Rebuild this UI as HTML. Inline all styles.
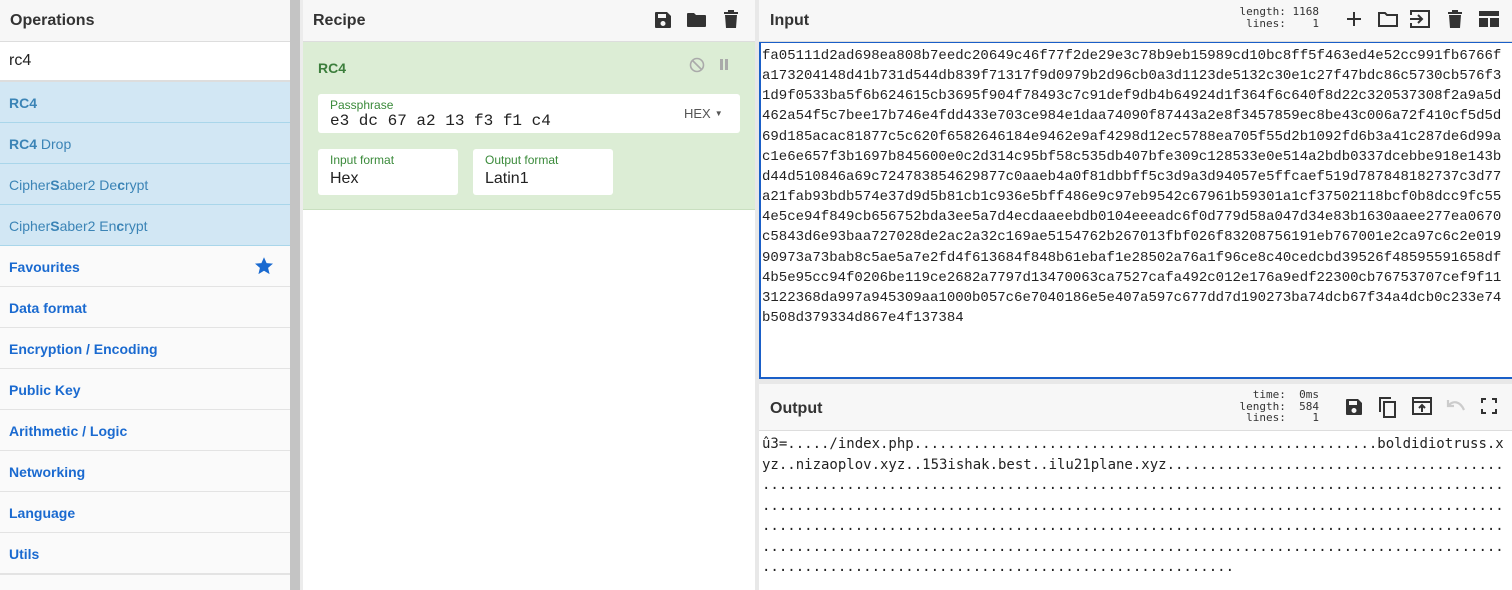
<!DOCTYPE html>
<html style="width:1512px;height:590px;overflow:hidden"><head><meta charset="utf-8"><style>
*{box-sizing:border-box;margin:0;padding:0}
body{width:1512px;height:590px;overflow:hidden;background:#fafafa;font-family:"Liberation Sans",Arial,sans-serif;position:relative}
.abs{position:absolute}
.hdr{height:42px;background:#f7f7f7;border-bottom:1px solid #ddd;font-size:16px;font-weight:bold;color:#333;padding:12px 10px 0 10px}
.op{position:absolute;left:0;width:290px;height:41px;border-bottom:1px solid #e3e3e3;padding:13px 9px;font-size:14px;font-weight:bold;color:#1a6ad0}
.sel{background:#d2e7f4;border-bottom:1px solid #a9d6ea;color:#3b84b6;font-weight:normal}
.mono{font-family:"Liberation Mono","DejaVu Sans Mono",monospace;font-size:14px;line-height:20.15px;color:#222;white-space:pre}
.dmono{font-family:"DejaVu Sans Mono",monospace;font-size:14px;line-height:20.5px;color:#222;white-space:pre}
.fld{position:absolute;background:#fff;border-radius:3px}
.lbl{font-size:12px;color:#3a8a3a;position:absolute;left:12px;top:4px}
.val{font-size:16px;color:#222;position:absolute;left:12px;top:21px}
.stat{font-family:"DejaVu Sans Mono",monospace;font-size:11px;line-height:11.5px;color:#333;text-align:right;white-space:pre}
</style></head><body>
<div class="abs" style="left:0;top:0;width:290px;height:590px;background:#fafafa;overflow:hidden">
<div class="hdr" style="font-size:16px">Operations</div>
<div class="abs" style="left:0;top:42px;width:290px;height:40px;background:#fff;border-bottom:2px solid #ddd;padding:10px 9px;font-size:16px;color:#222">rc4</div>
<div class="op sel" style="top:82px;font-weight:bold">RC4</div>
<div class="op sel" style="top:123px"><b>RC4</b> Drop</div>
<div class="op sel" style="top:164px">Cipher<b>S</b>aber2 De<b>c</b>rypt</div>
<div class="op sel" style="top:205px">Cipher<b>S</b>aber2 En<b>c</b>rypt</div>
<div class="op" style="top:246px">Favourites<svg style="position:absolute;left:254px;top:10px" width="20" height="20" viewBox="0 0 24 24"><path fill="#1a6ad0" d="M12 1.5l3.1 7.1 7.7.6-5.9 5 1.8 7.6L12 17.7l-6.7 4.1 1.8-7.6-5.9-5 7.7-.6z"/></svg></div>
<div class="op" style="top:287px">Data format</div>
<div class="op" style="top:328px">Encryption / Encoding</div>
<div class="op" style="top:369px">Public Key</div>
<div class="op" style="top:410px">Arithmetic / Logic</div>
<div class="op" style="top:451px">Networking</div>
<div class="op" style="top:492px">Language</div>
<div class="op" style="top:533px">Utils</div>
</div>
<div class="abs" style="left:290px;top:0;width:10px;height:590px;background:#c4c4c4"></div>
<div class="abs" style="left:300px;top:0;width:3px;height:590px;background:#ececec"></div>
<div class="abs" style="left:303px;top:0;width:452px;height:590px;background:#fff">
<div class="hdr">Recipe
<svg class="abs" style="left:350px;top:10px" width="20" height="20" viewBox="0 0 20 20"><path fill="#333" d="M3 2h11l4 4v11a1 1 0 0 1-1 1H3a1 1 0 0 1-1-1V3a1 1 0 0 1 1-1zM5 4v4h8V4zM10 11a2.5 2.5 0 1 0 0 5 2.5 2.5 0 0 0 0-5z"/></svg>
<svg class="abs" style="left:383px;top:10px" width="22" height="20" viewBox="0 0 22 20"><path fill="#333" d="M1 4a1 1 0 0 1 1-1h6l2 2h9a1 1 0 0 1 1 1v10a1 1 0 0 1-1 1H2a1 1 0 0 1-1-1z"/></svg>
<svg class="abs" style="left:420px;top:9px" width="16" height="20" viewBox="0 0 16 20"><path fill="#333" d="M1 3h14v2H1zM5 1h6v2H5zM2 6h12l-1 13H3z"/></svg>
</div>
<div class="abs" style="left:0;top:42px;width:452px;height:168px;background:#dcedd5;border-bottom:1px solid #c9dfc0">
<div class="abs" style="left:15px;top:18px;font-size:14px;font-weight:bold;color:#3c7e3c">RC4</div>
<svg class="abs" style="left:386px;top:15px" width="16" height="16" viewBox="0 0 16 16"><circle cx="8" cy="8" r="6.5" fill="none" stroke="#aaa" stroke-width="1.6"/><path d="M3.5 3.5l9 9" stroke="#aaa" stroke-width="1.6"/></svg>
<div class="abs" style="left:417px;top:17px;width:3px;height:11px;background:#aaa"></div>
<div class="abs" style="left:422px;top:17px;width:3px;height:11px;background:#aaa"></div>
<div class="fld" style="left:15px;top:52px;width:422px;height:39px"><div class="lbl">Passphrase</div><div class="val mono" style="font-size:16px;top:17px;line-height:20px">e3 dc 67 a2 13 f3 f1 c4</div>
<div class="abs" style="left:366px;top:12px;font-size:13px;color:#555">HEX<span style="font-size:8px;margin-left:4px;vertical-align:2px">▼</span></div></div>
<div class="fld" style="left:15px;top:107px;width:140px;height:46px"><div class="lbl">Input format</div><div class="val">Hex</div></div>
<div class="fld" style="left:170px;top:107px;width:140px;height:46px"><div class="lbl">Output format</div><div class="val">Latin1</div></div>
</div>
</div>
<div class="abs" style="left:755px;top:0;width:4px;height:590px;background:#e8e8e8"></div>
<div class="abs" style="left:759px;top:0;width:753px;height:42px;background:#f7f7f7;border-bottom:1px solid #ddd">
<div class="abs" style="left:11px;top:12px;font-size:16px;font-weight:bold;color:#333">Input</div>
<div class="abs stat" style="left:460px;top:6px;width:100px">length: 1168
lines:    1</div>
<svg class="abs" style="left:586px;top:10px" width="18" height="18" viewBox="0 0 18 18"><path d="M9 2v14M2 9h14" stroke="#333" stroke-width="2"/></svg>
<svg class="abs" style="left:618px;top:10px" width="22" height="18" viewBox="0 0 22 18"><path d="M2 3h6l2 2h10v11H2z" fill="none" stroke="#333" stroke-width="2"/></svg>
<svg class="abs" style="left:650px;top:9px" width="22" height="20" viewBox="0 0 22 20"><path d="M2 6V2h18v16H2v-4M1 10h11M9 6l4 4-4 4" fill="none" stroke="#333" stroke-width="2"/></svg>
<svg class="abs" style="left:688px;top:9px" width="16" height="20" viewBox="0 0 16 20"><path fill="#333" d="M1 3h14v2H1zM5 1h6v2H5zM2 6h12l-1 13H3z"/></svg>
<svg class="abs" style="left:720px;top:11px" width="20" height="16" viewBox="0 0 20 16"><path fill="#333" d="M0 0h20v5H0zM0 7h9v9H0zM11 7h9v9h-9z"/></svg>
</div>
<div class="abs" style="left:759px;top:42px;width:753px;height:337px;background:#fff;border-left:2px solid #1a5fc8;border-bottom:2px solid #1a5fc8;border-top:1px solid #1a5fc8"></div>
<div class="abs mono" style="left:762px;top:46px">fa05111d2ad698ea808b7eedc20649c46f77f2de29e3c78b9eb15989cd10bc8ff5f463ed4e52cc991fb6766f
a173204148d41b731d544db839f71317f9d0979b2d96cb0a3d1123de5132c30e1c27f47bdc86c5730cb576f3
1d9f0533ba5f6b624615cb3695f904f78493c7c91def9db4b64924d1f364f6c640f8d22c320537308f2a9a5d
462a54f5c7bee17b746e4fdd433e703ce984e1daa74090f87443a2e8f3457859ec8be43c006a72f410cf5d5d
69d185acac81877c5c620f6582646184e9462e9af4298d12ec5788ea705f55d2b1092fd6b3a41c287de6d99a
c1e6e657f3b1697b845600e0c2d314c95bf58c535db407bfe309c128533e0e514a2bdb0337dcebbe918e143b
d44d510846a69c724783854629877c0aaeb4a0f81dbbff5c3d9a3d94057e5ffcaef519d787848182737c3d77
a21fab93bdb574e37d9d5b81cb1c936e5bff486e9c97eb9542c67961b59301a1cf37502118bcf0b8dcc9fc55
4e5ce94f849cb656752bda3ee5a7d4ecdaaeebdb0104eeeadc6f0d779d58a047d34e83b1630aaee277ea0670
c5843d6e93baa727028de2ac2a32c169ae5154762b267013fbf026f83208756191eb767001e2ca97c6c2e019
90973a73bab8c5ae5a7e2fd4f613684f848b61ebaf1e28502a76a1f96ce8c40cedcbd39526f48595591658df
4b5e95cc94f0206be119ce2682a7797d13470063ca7527cafa492c012e176a9edf22300cb76753707cef9f11
3122368da997a945309aa1000b057c6e7040186e5e407a597c677dd7d190273ba74dcb67f34a4dcb0c233e74
b508d379334d867e4f137384</div>
<div class="abs" style="left:759px;top:379px;width:753px;height:5px;background:#e8e8e8"></div>
<div class="abs" style="left:759px;top:384px;width:753px;height:47px;background:#f7f7f7;border-bottom:1px solid #ddd">
<div class="abs" style="left:11px;top:16px;font-size:16px;font-weight:bold;color:#333">Output</div>
<div class="abs stat" style="left:460px;top:5px;width:100px">time:  0ms
length:  584
lines:    1</div>
<svg class="abs" style="left:585px;top:13px" width="20" height="20" viewBox="0 0 20 20"><path fill="#333" d="M3 2h11l4 4v11a1 1 0 0 1-1 1H3a1 1 0 0 1-1-1V3a1 1 0 0 1 1-1zM5 4v4h8V4zM10 11a2.5 2.5 0 1 0 0 5 2.5 2.5 0 0 0 0-5z"/></svg>
<svg class="abs" style="left:617px;top:11px" width="22" height="24" viewBox="0 0 22 24"><path d="M4 17V3h11M8 7h11v15H8z" fill="none" stroke="#333" stroke-width="2"/></svg>
<svg class="abs" style="left:652px;top:12px" width="22" height="20" viewBox="0 0 22 20"><path d="M2 2h18v16H2zM2 6h18M11 16v-7M8 12l3-3 3 3" fill="none" stroke="#333" stroke-width="2"/></svg>
<svg class="abs" style="left:686px;top:14px" width="22" height="16" viewBox="0 0 22 16"><path d="M3 8c5-6 12-5 16 4M3 2v6h6" fill="none" stroke="#ccc" stroke-width="2.2"/></svg>
<svg class="abs" style="left:722px;top:14px" width="16" height="16" viewBox="0 0 16 16"><path d="M1 5V1h4M11 1h4v4M15 11v4h-4M5 15H1v-4" fill="none" stroke="#333" stroke-width="2"/></svg>
</div>
<div class="abs" style="left:759px;top:431px;width:753px;height:159px;background:#fff"></div>
<div class="abs dmono" style="left:762px;top:434px">û3=...../index.php.......................................................boldidiotruss.x
yz..nizaoplov.xyz..153ishak.best..ilu21plane.xyz........................................
........................................................................................
........................................................................................
........................................................................................
........................................................................................
........................................................</div>
<div class="abs" style="left:0;top:574px;width:290px;height:16px;border-top:1px solid #e3e3e3;background:#fafafa"></div>
</body></html>
